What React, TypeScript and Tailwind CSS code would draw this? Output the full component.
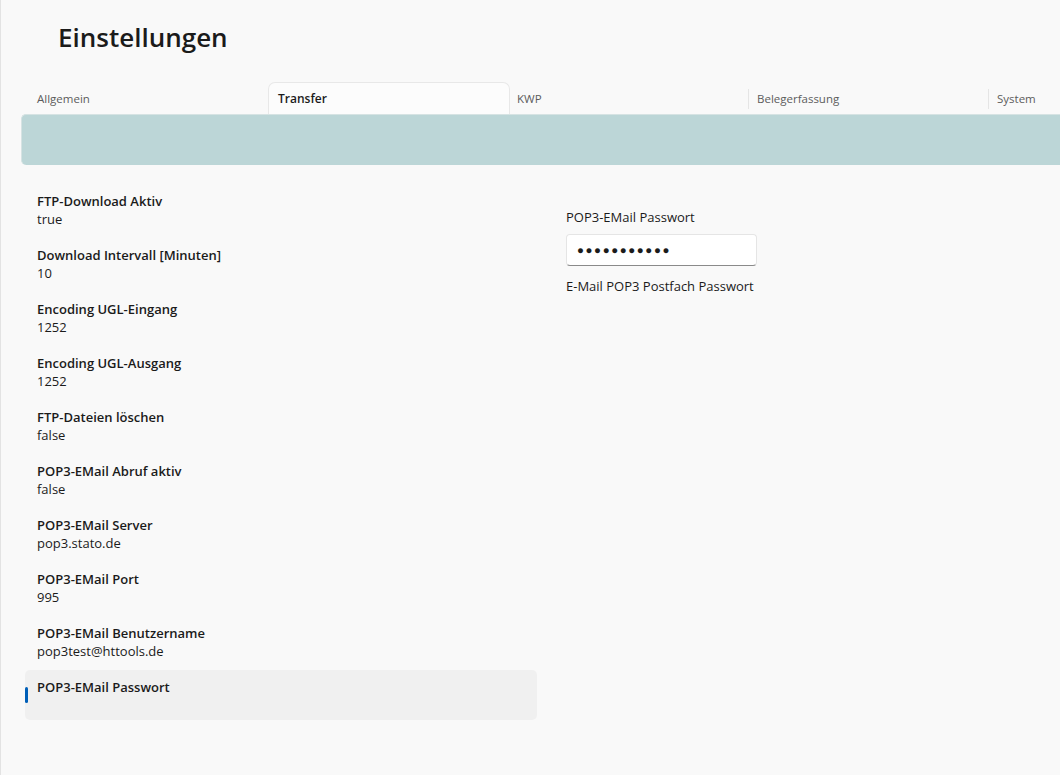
import React from "react";

const tabs = ["Allgemein", "Transfer", "KWP", "Belegerfassung", "System"];
const active = 1;

const settings = [
  { label: "FTP-Download Aktiv", value: "true" },
  { label: "Download Intervall [Minuten]", value: "10" },
  { label: "Encoding UGL-Eingang", value: "1252" },
  { label: "Encoding UGL-Ausgang", value: "1252" },
  { label: "FTP-Dateien löschen", value: "false" },
  { label: "POP3-EMail Abruf aktiv", value: "false" },
  { label: "POP3-EMail Server", value: "pop3.stato.de" },
  { label: "POP3-EMail Port", value: "995" },
  { label: "POP3-EMail Benutzername", value: "pop3test@httools.de" },
  { label: "POP3-EMail Passwort", value: "" },
];

const selected = settings.length - 1;

export default function App() {
  return (
    <div
      className="h-[775px] w-[1060px] overflow-hidden border-l border-[#e3e3e3] bg-[#f9f9f9] text-[#1b1b1b]"
      style={{ fontFamily: '"Segoe UI", "Open Sans", "Noto Sans", sans-serif' }}
    >
      <h1 className="pl-[57px] pt-[19px] text-[26px] font-semibold leading-[36px]">Einstellungen</h1>

      <div className="mt-[27px] flex h-[32px] pl-[27px]">
        {tabs.map((t, i) => {
          const isActive = i === active;
          const showSep = i > 0 && i !== active && i - 1 !== active;
          return (
            <div
              key={t}
              className={
                isActive
                  ? "relative z-10 mr-[-2px] flex w-[242px] shrink-0 items-center rounded-t-[7px] border border-b-0 border-[#e8e8e8] bg-[#fcfcfc] pl-[9px] text-[12px] font-semibold text-[#1b1b1b]"
                  : "relative flex w-[240px] shrink-0 items-center pl-[9px] text-[11.5px] text-[#5c5c5c]"
              }
            >
              {showSep && <span className="absolute left-0 top-[7px] h-[20px] w-px bg-[#e5e5e5]" />}
              <span className="pt-[1px]">{t}</span>
            </div>
          );
        })}
      </div>

      <div className="ml-[20px] h-[51px] rounded-l-[5px] border-l border-t border-[#d6e3e3] bg-[#bcd6d7]" />

      <div className="mt-[19px] flex">
        <div className="ml-[24px] flex w-[512px] flex-col gap-[4px]">
          {settings.map((s, i) => (
            <div
              key={s.label}
              className={
                i === selected
                  ? "relative h-[50px] rounded-[5px] bg-[#f0f0f0] pl-[12px] pt-[8px]"
                  : "relative h-[50px] pl-[12px] pt-[8px]"
              }
            >
              {i === selected && (
                <span className="absolute left-0 top-[17px] h-[16px] w-[3px] rounded-full bg-[#005fb8]" />
              )}
              <div className="text-[13px] font-semibold leading-[18px]">{s.label}</div>
              <div className="text-[13px] leading-[18px]">{s.value}</div>
            </div>
          ))}
        </div>

        <div className="ml-[29px] pt-[24px]">
          <div className="text-[13px] leading-[18px]">POP3-EMail Passwort</div>
          <div className="mt-[8px] flex h-[32px] w-[191px] items-center rounded-[4px] border border-[#e5e5e5] border-b-[#8a8a8a] bg-white pl-[10px]">
            <span className="text-[11.5px] tracking-[1.6px] text-[#1b1b1b]">●●●●●●●●●●●</span>
          </div>
          <div className="mt-[11px] text-[13px] leading-[18px] text-[#1b1b1b]">E-Mail POP3 Postfach Passwort</div>
        </div>
      </div>
    </div>
  );
}
